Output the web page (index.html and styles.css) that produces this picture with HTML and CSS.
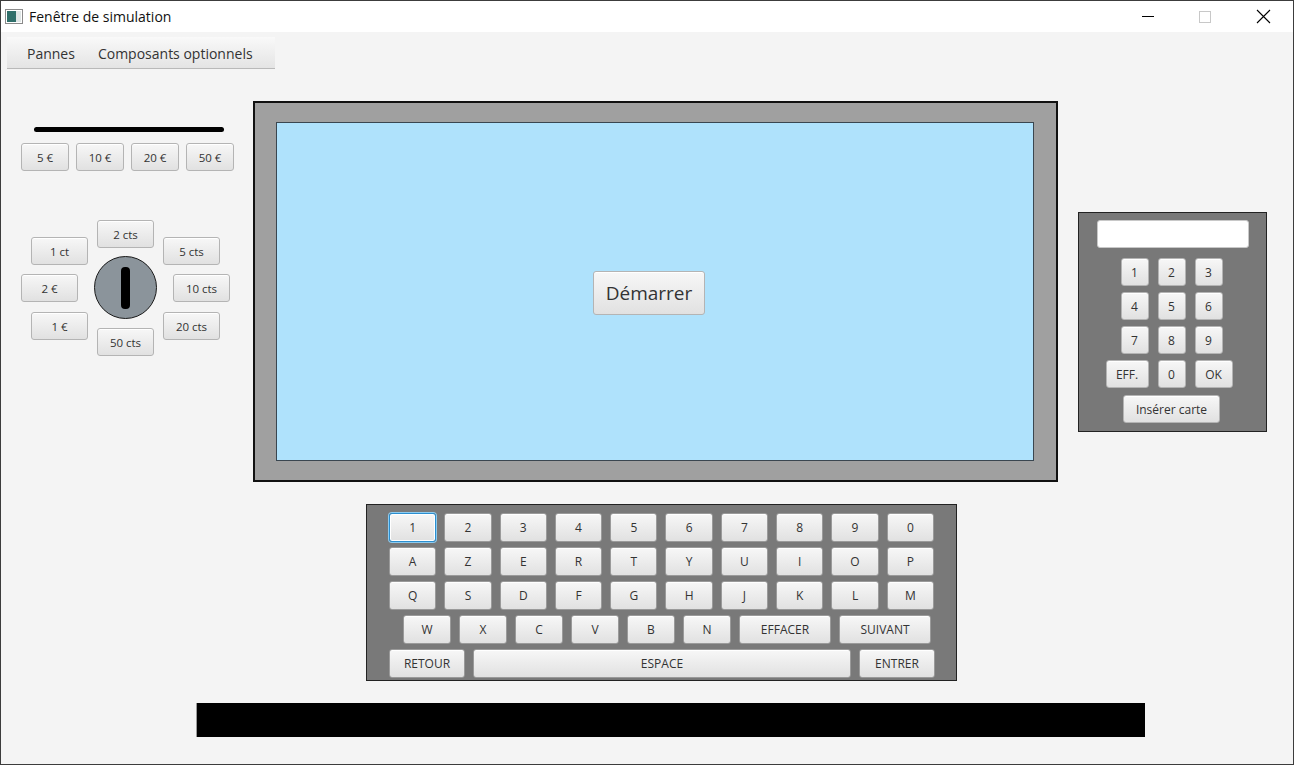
FILE: index.html
```html
<!DOCTYPE html>
<html lang="fr">
<head>
    <meta charset="UTF-8">
    <title>Fenêtre de simulation</title>
    <link rel="stylesheet" href="styles.css">
</head>
<body>
    <div class="window">
        <div class="titlebar">
            <svg class="app-icon" width="18" height="16" viewBox="0 0 18 16">
                <rect x="0.5" y="0.5" width="17" height="14" fill="#fff" stroke="#8a8a8a"/>
                <rect x="2" y="2" width="9" height="11" fill="#2f6f6a"/>
                <rect x="11" y="2" width="5" height="11" fill="#dfe6e6"/>
            </svg>
            <span class="title">Fenêtre de simulation</span>
            <div class="controls">
                <svg width="46" height="31" viewBox="0 0 46 31"><line x1="18" y1="15.5" x2="30" y2="15.5" stroke="#000" stroke-width="1"/></svg>
                <svg width="46" height="31" viewBox="0 0 46 31"><rect x="17.5" y="10.5" width="11" height="11" fill="none" stroke="#c8c8c8"/></svg>
                <svg width="46" height="31" viewBox="0 0 46 31"><path d="M17 9 L30 22 M30 9 L17 22" stroke="#000" stroke-width="1.1" fill="none"/></svg>
            </div>
        </div>

        <div class="content">
            <div class="menubar">
                <span class="menu-item">Pannes</span>
                <span class="menu-item">Composants optionnels</span>
            </div>

            <div class="top-row">
                <div class="money-panel">
                    <div class="bill-slot"></div>
                    <div class="bills">
                        <button class="btn bill">5 €</button>
                        <button class="btn bill">10 €</button>
                        <button class="btn bill">20 €</button>
                        <button class="btn bill">50 €</button>
                    </div>
                    <!-- pièces disposées autour de la fente -->
                    <div class="coins">
                        <button class="btn coin c-2cts">2 cts</button>
                        <button class="btn coin c-1ct">1 ct</button>
                        <button class="btn coin c-5cts">5 cts</button>
                        <button class="btn coin c-2e">2 €</button>
                        <button class="btn coin c-10cts">10 cts</button>
                        <button class="btn coin c-1e">1 €</button>
                        <button class="btn coin c-20cts">20 cts</button>
                        <button class="btn coin c-50cts">50 cts</button>
                        <div class="coin-slot"><div class="slot-line"></div></div>
                    </div>
                </div>

                <div class="screen">
                    <div class="screen-inner">
                        <button class="btn start">Démarrer</button>
                    </div>
                </div>

                <div class="pinpad">
                    <div class="pin-field"></div>
                    <div class="pin-keys">
                        <button class="btn key-sq k-right">1</button>
                        <button class="btn key-sq">2</button>
                        <button class="btn key-sq k-left">3</button>
                        <button class="btn key-sq k-right">4</button>
                        <button class="btn key-sq">5</button>
                        <button class="btn key-sq k-left">6</button>
                        <button class="btn key-sq k-right">7</button>
                        <button class="btn key-sq">8</button>
                        <button class="btn key-sq k-left">9</button>
                        <button class="btn key-eff">EFF.</button>
                        <button class="btn key-sq">0</button>
                        <button class="btn key-ok k-left">OK</button>
                    </div>
                    <button class="btn card">Insérer carte</button>
                </div>
            </div>

            <div class="keyboard">
                <div class="kb-row">
                    <button class="btn kb-key focused">1</button>
                    <button class="btn kb-key">2</button>
                    <button class="btn kb-key">3</button>
                    <button class="btn kb-key">4</button>
                    <button class="btn kb-key">5</button>
                    <button class="btn kb-key">6</button>
                    <button class="btn kb-key">7</button>
                    <button class="btn kb-key">8</button>
                    <button class="btn kb-key">9</button>
                    <button class="btn kb-key">0</button>
                </div>
                <div class="kb-row">
                    <button class="btn kb-key">A</button>
                    <button class="btn kb-key">Z</button>
                    <button class="btn kb-key">E</button>
                    <button class="btn kb-key">R</button>
                    <button class="btn kb-key">T</button>
                    <button class="btn kb-key">Y</button>
                    <button class="btn kb-key">U</button>
                    <button class="btn kb-key">I</button>
                    <button class="btn kb-key">O</button>
                    <button class="btn kb-key">P</button>
                </div>
                <div class="kb-row">
                    <button class="btn kb-key">Q</button>
                    <button class="btn kb-key">S</button>
                    <button class="btn kb-key">D</button>
                    <button class="btn kb-key">F</button>
                    <button class="btn kb-key">G</button>
                    <button class="btn kb-key">H</button>
                    <button class="btn kb-key">J</button>
                    <button class="btn kb-key">K</button>
                    <button class="btn kb-key">L</button>
                    <button class="btn kb-key">M</button>
                </div>
                <div class="kb-row kb-row-4">
                    <button class="btn kb-key wide48">W</button>
                    <button class="btn kb-key wide48">X</button>
                    <button class="btn kb-key wide48">C</button>
                    <button class="btn kb-key wide48">V</button>
                    <button class="btn kb-key wide48">B</button>
                    <button class="btn kb-key wide48">N</button>
                    <button class="btn kb-key wide92">EFFACER</button>
                    <button class="btn kb-key wide92">SUIVANT</button>
                </div>
                <div class="kb-row">
                    <button class="btn kb-key wide76">RETOUR</button>
                    <button class="btn kb-key space">ESPACE</button>
                    <button class="btn kb-key wide76">ENTRER</button>
                </div>
            </div>

            <div class="receipt-slot"></div>
        </div>
    </div>
</body>
</html>
```

FILE: styles.css
```css
html, body {
    margin: 0;
    padding: 0;
}
body {
    font-family: "Open Sans", "Noto Sans", sans-serif;
    color: #333;
}
.window {
    width: 1294px;
    height: 765px;
    box-sizing: border-box;
    border: 1px solid #3c3c3c;
    background: #f4f4f4;
    overflow: hidden;
}
.titlebar {
    height: 31px;
    background: #fff;
    display: flex;
    align-items: center;
}
.app-icon {
    margin-left: 4px;
    margin-top: 1px;
}
.title {
    margin-left: 6px;
    font-size: 14px;
    color: #111;
}
.controls {
    margin-left: auto;
    margin-right: 7px;
    display: flex;
}
.controls svg {
    display: block;
    margin-left: 12px;
}

.content {
    display: flex;
    flex-direction: column;
    align-items: flex-start;
}
.menubar {
    margin: 5px 0 0 6px;
    width: 268px;
    height: 31px;
    background: linear-gradient(#f9f9f9, #e4e4e4);
    border-bottom: 1px solid #b9b9b9;
    display: flex;
    align-items: center;
    padding-top: 2px;
    box-sizing: border-box;
    height: 32px;
    font-size: 14px;
    color: #333;
}
.menu-item {
    margin-left: 20px;
    margin-right: 3px;
}

.btn {
    font-family: "Open Sans", "Noto Sans", sans-serif;
    font-size: 11.5px;
    color: #333;
    background: linear-gradient(#f7f7f7, #e1e1e1);
    border: 1px solid #b4b4b4;
    border-radius: 3px;
    box-shadow: inset 0 1px 0 #fff;
    padding: 0;
    box-sizing: border-box;
    cursor: pointer;
}

.top-row {
    margin-top: 32px;
    display: flex;
    align-items: flex-start;
}
.money-panel {
    width: 252px;
    box-sizing: border-box;
    padding-left: 20px;
}
.bill-slot {
    margin: 26px 0 0 13px;
    width: 190px;
    height: 5px;
    background: #000;
    border-radius: 3px;
}
.bills {
    margin-top: 11px;
    display: flex;
    gap: 7px;
}
.bill {
    width: 48px;
    height: 28px;
}
.coins {
    position: relative;
    margin-top: 49px;
    width: 212px;
    height: 140px;
}
.coin {
    position: absolute;
    width: 57px;
    height: 28px;
}
.c-2cts { left: 76px; top: 0; }
.c-1ct { left: 10px; top: 17px; }
.c-5cts { left: 142px; top: 17px; }
.c-2e { left: 0; top: 54px; }
.c-10cts { left: 152px; top: 54px; }
.c-1e { left: 10px; top: 92px; }
.c-20cts { left: 142px; top: 92px; }
.c-50cts { left: 76px; top: 108px; }
.coin-slot {
    position: absolute;
    left: 73px;
    top: 36px;
    width: 63px;
    height: 63px;
    box-sizing: border-box;
    border: 1px solid #1a1a1a;
    border-radius: 50%;
    background: #8b949b;
    display: flex;
    align-items: center;
    justify-content: center;
}
.slot-line {
    width: 9px;
    height: 42px;
    background: #000;
    border-radius: 4px;
}

.screen {
    width: 805px;
    height: 381px;
    box-sizing: border-box;
    border: 2px solid #111;
    background: #a0a0a0;
    padding: 19px 22px 19px 21px;
}
.screen-inner {
    height: 100%;
    box-sizing: border-box;
    border: 1px solid #3a4650;
    background: #afe2fc;
    display: flex;
    align-items: center;
    justify-content: center;
    padding: 3px 12px 0 0;
}
.start {
    width: 112px;
    height: 44px;
    font-size: 19px;
}

.pinpad {
    margin: 111px 0 0 20px;
    width: 189px;
    height: 220px;
    box-sizing: border-box;
    border: 1px solid #222;
    background: #787878;
    display: flex;
    flex-direction: column;
    align-items: center;
    padding-top: 7px;
}
.pin-field {
    width: 152px;
    height: 28px;
    box-sizing: border-box;
    margin-left: 1px;
    background: #fff;
    border: 1px solid #c8c8c8;
    border-radius: 3px;
}
.pin-keys {
    margin-top: 10px;
    display: grid;
    grid-template-columns: 43px 28px 38px;
    column-gap: 9px;
    row-gap: 6px;
    margin-left: -7px;
}
.key-sq {
    width: 28px;
    height: 28px;
    font-size: 12px;
}
.k-right { justify-self: end; }
.k-left { justify-self: start; }
.key-eff {
    width: 43px;
    height: 28px;
    font-size: 12px;
}
.key-ok {
    width: 38px;
    height: 28px;
    font-size: 12px;
}
.card {
    margin-top: 7px;
    margin-left: -2px;
    width: 97px;
    height: 28px;
    font-size: 12px;
}

.keyboard {
    margin: 22px 0 0 365px;
    width: 591px;
    height: 177px;
    box-sizing: border-box;
    border: 1px solid #222;
    background: #797979;
    padding: 8px 0 0 22px;
    display: flex;
    flex-direction: column;
    gap: 5px;
}
.kb-row {
    display: flex;
    gap: 8px;
}
.kb-row-4 {
    margin-left: 14px;
}
.kb-key {
    width: 47.3px;
    height: 29px;
    font-size: 12px;
    border-color: #9a9a9a;
}
.kb-key.focused {
    border: 1px solid #2b8fd0;
    box-shadow: 0 0 0 1px #8ccbf0, inset 0 0 0 1px #fff;
}
.wide48 { width: 48px; }
.wide92 { width: 92px; }
.wide76 { width: 76px; }
.space { width: 378px; }

.receipt-slot {
    margin: 22px 0 0 195px;
    width: 949px;
    height: 34px;
    box-sizing: border-box;
    background: #000;
    border-left: 1px solid #9a9a9a;
}
```
